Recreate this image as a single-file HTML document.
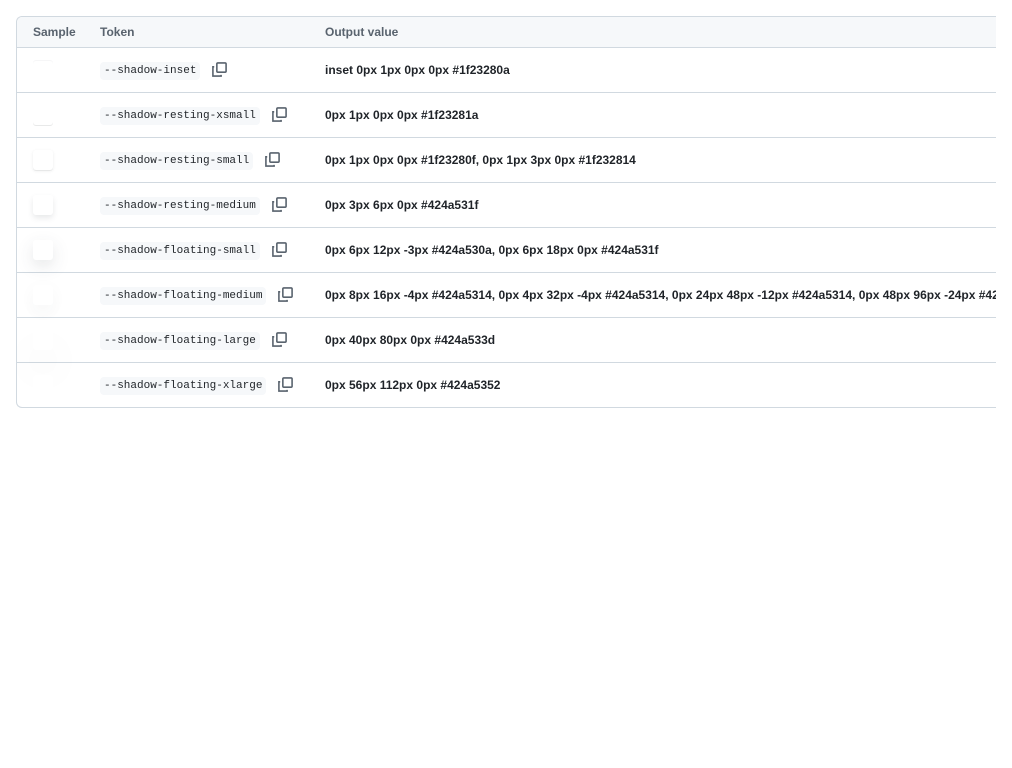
<!DOCTYPE html><html><head><style>
body{margin:0;background:#fff;font-family:"Liberation Sans",sans-serif;color:#1f2328}
.wrap{position:absolute;left:16px;top:16px;width:979px;height:390px;border:1px solid #d1d9e0;border-right:none;border-radius:6px 0 0 6px;overflow:hidden}
.hd{height:30px;background:#f6f8fa;border-bottom:1px solid #d1d9e0;position:relative;font-size:12px;font-weight:bold;color:#59636e}
.hd span{position:absolute;top:8px}
.row{height:44px;border-bottom:1px solid #d1d9e0;position:relative}
.row:last-child{border-bottom:none}
.s{position:absolute;left:16px;top:12px;width:20px;height:20px;background:#fff;border-radius:3px}
.t{position:absolute;left:83px;top:14px;font-family:"Liberation Mono",monospace;font-size:11px;background:#f6f8fa;padding:2px 4px;border-radius:4px;line-height:14px;white-space:nowrap}
.t svg{position:absolute;top:-1px;}
.v{position:absolute;left:308px;top:15px;font-size:12px;font-weight:bold;white-space:nowrap}
</style></head><body>
<div class="wrap">
<div class="hd"><span style="left:16px">Sample</span><span style="left:83px">Token</span><span style="left:308px">Output value</span></div>
<div class="row"><div class="s" style="box-shadow:inset 0 1px 0 #1f23280a"></div><div class="t">--shadow-inset<svg style="right:-28px" width="17" height="17" viewBox="0 0 16 16" fill="none" stroke="#59636e" stroke-width="1.5"><path d="M3 5.5H1.8v8.7h7.7v-1.2"/><rect x="5.5" y="1.8" width="8.7" height="8.7" rx="1"/></svg></div><div class="v">inset 0px 1px 0px 0px #1f23280a</div></div>
<div class="row"><div class="s" style="box-shadow:0 1px 0 #1f23281a"></div><div class="t">--shadow-resting-xsmall<svg style="right:-28px" width="17" height="17" viewBox="0 0 16 16" fill="none" stroke="#59636e" stroke-width="1.5"><path d="M3 5.5H1.8v8.7h7.7v-1.2"/><rect x="5.5" y="1.8" width="8.7" height="8.7" rx="1"/></svg></div><div class="v">0px 1px 0px 0px #1f23281a</div></div>
<div class="row"><div class="s" style="box-shadow:0 1px 0 #1f23280f,0 1px 3px #1f232814"></div><div class="t">--shadow-resting-small<svg style="right:-28px" width="17" height="17" viewBox="0 0 16 16" fill="none" stroke="#59636e" stroke-width="1.5"><path d="M3 5.5H1.8v8.7h7.7v-1.2"/><rect x="5.5" y="1.8" width="8.7" height="8.7" rx="1"/></svg></div><div class="v">0px 1px 0px 0px #1f23280f, 0px 1px 3px 0px #1f232814</div></div>
<div class="row"><div class="s" style="box-shadow:0 3px 6px #424a531f"></div><div class="t">--shadow-resting-medium<svg style="right:-28px" width="17" height="17" viewBox="0 0 16 16" fill="none" stroke="#59636e" stroke-width="1.5"><path d="M3 5.5H1.8v8.7h7.7v-1.2"/><rect x="5.5" y="1.8" width="8.7" height="8.7" rx="1"/></svg></div><div class="v">0px 3px 6px 0px #424a531f</div></div>
<div class="row"><div class="s" style="box-shadow:0 6px 12px -3px #424a530a,0 6px 18px #424a531f"></div><div class="t">--shadow-floating-small<svg style="right:-28px" width="17" height="17" viewBox="0 0 16 16" fill="none" stroke="#59636e" stroke-width="1.5"><path d="M3 5.5H1.8v8.7h7.7v-1.2"/><rect x="5.5" y="1.8" width="8.7" height="8.7" rx="1"/></svg></div><div class="v">0px 6px 12px -3px #424a530a, 0px 6px 18px 0px #424a531f</div></div>
<div class="row"><div class="s" style="box-shadow:0 8px 16px -4px #424a5314,0 4px 32px -4px #424a5314"></div><div class="t">--shadow-floating-medium<svg style="right:-28px" width="17" height="17" viewBox="0 0 16 16" fill="none" stroke="#59636e" stroke-width="1.5"><path d="M3 5.5H1.8v8.7h7.7v-1.2"/><rect x="5.5" y="1.8" width="8.7" height="8.7" rx="1"/></svg></div><div class="v">0px 8px 16px -4px #424a5314, 0px 4px 32px -4px #424a5314, 0px 24px 48px -12px #424a5314, 0px 48px 96px -24px #424a5314</div></div>
<div class="row"><div class="s" style="box-shadow:0 20px 40px #424a5310"></div><div class="t">--shadow-floating-large<svg style="right:-28px" width="17" height="17" viewBox="0 0 16 16" fill="none" stroke="#59636e" stroke-width="1.5"><path d="M3 5.5H1.8v8.7h7.7v-1.2"/><rect x="5.5" y="1.8" width="8.7" height="8.7" rx="1"/></svg></div><div class="v">0px 40px 80px 0px #424a533d</div></div>
<div class="row"><div class="s" style="box-shadow:0 28px 56px #424a530c"></div><div class="t">--shadow-floating-xlarge<svg style="right:-28px" width="17" height="17" viewBox="0 0 16 16" fill="none" stroke="#59636e" stroke-width="1.5"><path d="M3 5.5H1.8v8.7h7.7v-1.2"/><rect x="5.5" y="1.8" width="8.7" height="8.7" rx="1"/></svg></div><div class="v">0px 56px 112px 0px #424a5352</div></div>
</div>
</body></html>
